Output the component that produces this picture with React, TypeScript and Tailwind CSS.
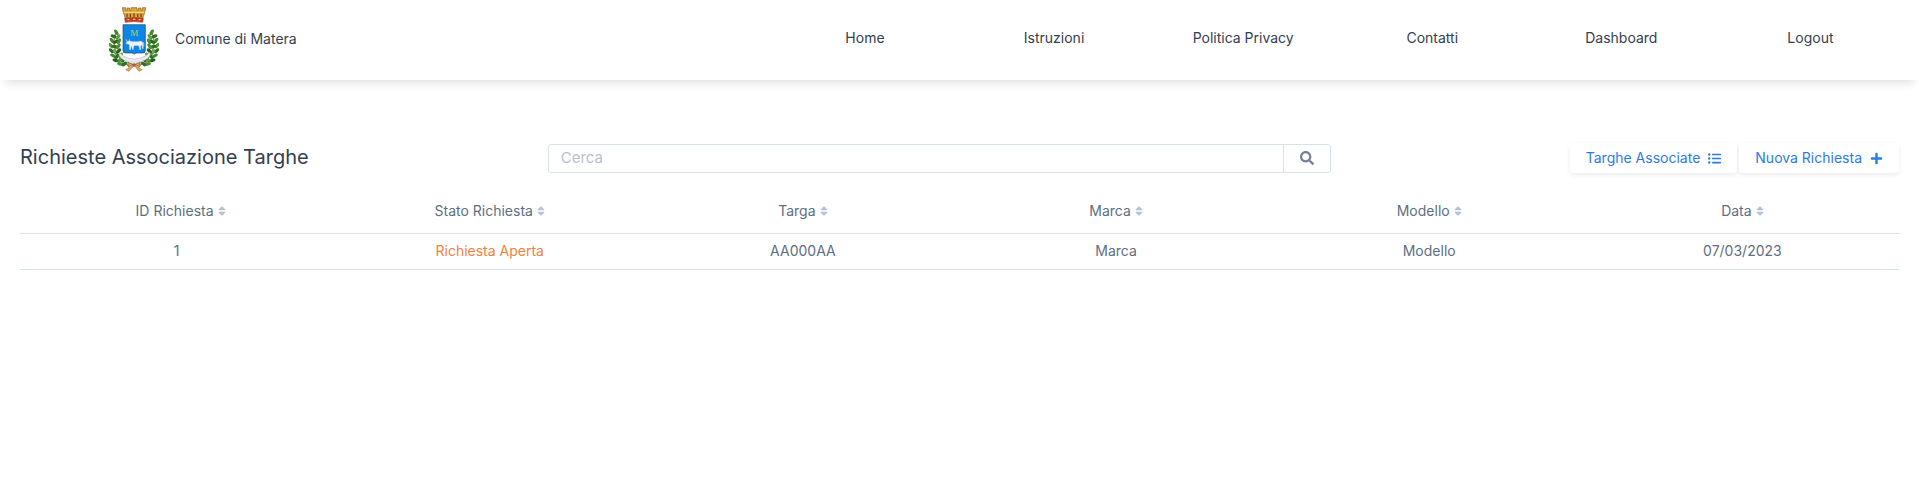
import { FaListUl, FaPlus, FaSearch, FaSort } from "react-icons/fa";

const NAV_LINKS = ["Home", "Istruzioni", "Politica Privacy", "Contatti", "Dashboard", "Logout"];

const COLUMNS = ["ID Richiesta", "Stato Richiesta", "Targa", "Marca", "Modello", "Data"];

const REQUESTS = [
  {
    id: "1",
    status: "Richiesta Aperta",
    plate: "AA000AA",
    brand: "Marca",
    model: "Modello",
    date: "07/03/2023",
  },
];

// leaves of the left laurel branch: x, y, rotation, fill
const LEAVES: [number, number, number, string][] = [
  [22, 76, 60, "#3f8a2c"],
  [14, 88, 20, "#2f6f24"],
  [27, 90, -50, "#5f9e3c"],
  [9, 101, 55, "#3f8a2c"],
  [21, 104, -30, "#25601d"],
  [30, 103, -65, "#4a8f35"],
  [6, 116, 50, "#4f9a35"],
  [17, 119, 10, "#2f6f24"],
  [28, 118, -55, "#4a8f35"],
  [7, 131, 40, "#2f6f24"],
  [18, 134, 70, "#6fae4a"],
  [29, 132, -45, "#25601d"],
  [12, 146, 30, "#3f8a2c"],
  [24, 148, -50, "#2f6f24"],
  [35, 145, -60, "#5f9e3c"],
  [20, 160, 15, "#25601d"],
  [32, 160, -60, "#4f9a35"],
  [43, 158, -70, "#2f6f24"],
  [34, 171, 10, "#4a8f35"],
  [46, 171, -40, "#2f6f24"],
];

function Laurel() {
  return (
    <g>
      <path d="M22 74C10 100 8 140 58 176" fill="none" stroke="#6b5a2a" strokeWidth="3" />
      {LEAVES.map(([x, y, angle, fill]) => (
        <ellipse
          key={`${x}-${y}`}
          cx={x}
          cy={y}
          rx="9.500"
          ry="5"
          fill={fill}
          transform={`rotate(${angle} ${x} ${y})`}
        />
      ))}
      <circle cx="16" cy="110" r="2" fill="#c2402b" />
      <circle cx="21" cy="141" r="2" fill="#c2402b" />
      <circle cx="38" cy="164" r="2" fill="#c2402b" />
    </g>
  );
}

function Crest() {
  return (
    <svg viewBox="0 0 150 195" className="h-[65px] w-[50px] shrink-0" role="img" aria-label="Stemma">
      <Laurel />
      <g transform="translate(150 0) scale(-1 1)">
        <Laurel />
      </g>

      {/* ribbon and bow */}
      <path
        d="M32 136Q42 154 75 156Q108 154 122 136L124 144Q112 166 75 166Q40 166 30 144Z"
        fill="#e9ebf1"
        stroke="#a9b0c2"
        strokeWidth="1.5"
      />
      <path
        d="M73 172L56 166L58 180ZM77 172L94 166L92 180Z"
        fill="#d8a26a"
        stroke="#7b4a26"
        strokeWidth="2"
      />
      <path
        d="M72 176L50 188L60 193L70 181ZM78 176L100 188L90 193L80 181Z"
        fill="#dcae4c"
        stroke="#96602c"
        strokeWidth="1.5"
      />
      <circle cx="75" cy="174" r="5" fill="#b6503a" />

      {/* shield */}
      <path
        d="M42 53H109V131Q109 138 101 138H84Q77 138 75.500 142Q74 138 67 138H50Q42 138 42 131Z"
        fill="#0b86e8"
        stroke="#2b4257"
        strokeWidth="2"
      />
      <text
        x="76"
        y="87"
        textAnchor="middle"
        fontSize="27"
        fill="#c3cc62"
        className="font-['Liberation_Serif']"
      >
        M
      </text>
      {/* ox: body with legs, then horns and tail */}
      <path
        d="M52 104L57 103L62 101L66 103Q84 105 95 102Q102 103 102 110L103 125L100 125L98 114L95 117L96 128L92 128L89 116L75 116L73 128L70 128L68 117L65 128L61 128L61 114L57 111L52 112Z"
        fill="#eef1f5"
        stroke="#8fa9c2"
        strokeWidth="1"
      />
      <path d="M51 97Q52 102 56 103M62 97Q61 101 58 103M102 105Q106 110 104 118" fill="none" stroke="#eef1f5" strokeWidth="2" />

      {/* mural crown */}
      <path
        d="M40 2H50V10H54V3H62V10H66V2H84V10H88V3H96V10H100V2H110L107 17L101 34H49L43 17Z"
        fill="#dfa53a"
        stroke="#8d5a1c"
        strokeWidth="2"
      />
      <path d="M44 16H106" stroke="#f7dc86" strokeWidth="3" />
      <path
        d="M54 20V31M64 20V31M75 19V31M86 20V31M96 20V31"
        stroke="#7a4416"
        strokeWidth="4"
      />
      <path d="M47 34Q75 29 103 34L101 46Q75 41 49 46Z" fill="#c9372c" stroke="#8c4a1c" strokeWidth="2" />
      <path d="M55 38H61M72 37H79M89 38H95" stroke="#f0cf6a" strokeWidth="4" />
    </svg>
  );
}

function Header() {
  return (
    <header className="flex h-20 items-center bg-white px-[14px] shadow-[0_8px_10px_-6px_rgba(0,0,0,0.15)]">
      <a href="#" className="ml-[95px] flex items-center gap-4 pb-0.5">
        <Crest />
        <span className="text-sm">Comune di Matera</span>
      </a>
      <nav className="ml-auto w-3/5">
        <ul className="grid grid-cols-6 pb-1 text-center text-sm">
          {NAV_LINKS.map((label) => (
            <li key={label}>
              <a href="#" className="hover:text-[#2c7be5]">
                {label}
              </a>
            </li>
          ))}
        </ul>
      </nav>
    </header>
  );
}

function ActionButton({ label, children }: { label: string; children: React.ReactNode }) {
  return (
    <button
      type="button"
      className="flex h-[30px] items-center gap-2 rounded bg-white px-4 text-sm text-[#2c7be5] shadow-[0_2px_5px_rgba(0,0,0,0.08)]"
    >
      {label}
      {children}
    </button>
  );
}

export default function App() {
  return (
    <div className="bg-white font-[Inter,'Noto_Sans',sans-serif] text-[#344050]">
      <Header />
      <main className="px-5 pt-[63px]">
        <div className="flex items-center justify-between">
          <h1 className="pb-0.5 text-xl">Richieste Associazione Targhe</h1>
          <form className="flex h-[29px] w-5/12" onSubmit={(e) => e.preventDefault()}>
            <input
              type="search"
              aria-label="Cerca"
              placeholder="Cerca"
              className="min-w-0 flex-1 rounded-l-[3px] border border-[#d8e2ef] px-3 text-[15px] outline-none placeholder:text-[#b6c1d2]"
            />
            <button
              type="submit"
              aria-label="Avvia ricerca"
              className="-ml-px flex w-12 items-center justify-center rounded-r-[3px] border border-[#d8e2ef] text-[#748194]"
            >
              <FaSearch className="size-[14px]" />
            </button>
          </form>
          <div className="flex gap-0.5">
            <ActionButton label="Targhe Associate">
              <FaListUl className="size-[13px]" />
            </ActionButton>
            <ActionButton label="Nuova Richiesta">
              <FaPlus className="size-[13px]" />
            </ActionButton>
          </div>
        </div>

        <table className="mt-4 w-full table-fixed text-center text-sm text-[#5e6e82]">
          <thead>
            <tr className="h-11 border-b border-[#d8e2ef]">
              {COLUMNS.map((label) => (
                <th key={label} scope="col" className="font-normal first:pl-2">
                  <button type="button" className="inline-flex items-center gap-1">
                    {label}
                    <FaSort className="h-3 w-2 text-[#b6c1d2]" />
                  </button>
                </th>
              ))}
            </tr>
          </thead>
          <tbody>
            {REQUESTS.map((request) => (
              <tr key={request.id} className="h-9 border-b border-[#d8e2ef]">
                <td>{request.id}</td>
                <td className="text-[#f5803e]">{request.status}</td>
                <td>{request.plate}</td>
                <td>{request.brand}</td>
                <td>{request.model}</td>
                <td>{request.date}</td>
              </tr>
            ))}
          </tbody>
        </table>
      </main>
    </div>
  );
}
